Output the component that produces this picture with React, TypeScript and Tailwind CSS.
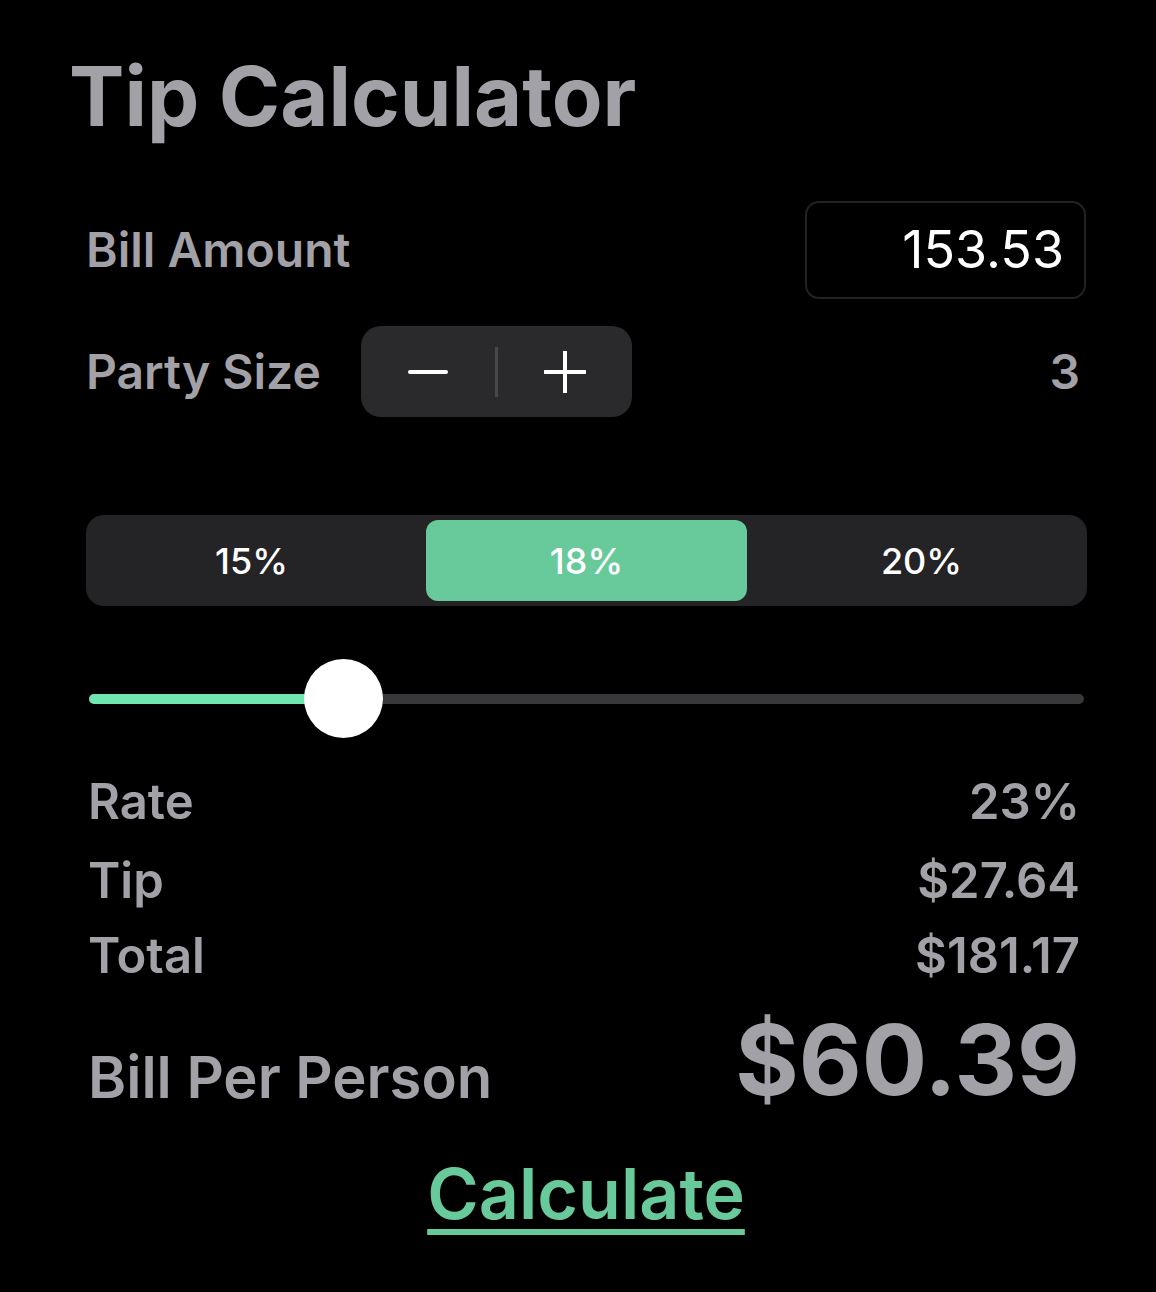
import React from "react";

export default function App() {
  const gray = "text-[#a2a1a7]";
  return (
    <div className="w-[1156px] h-[1292px] bg-black overflow-hidden" style={{ fontFamily: "Inter, 'Noto Sans', sans-serif" }}>
      <div className="pl-[69px] pt-[55px]">
        <h1 className={`text-[83px] font-bold leading-none ${gray}`}>Tip Calculator</h1>
      </div>
      <div className="pl-[86px] pr-[70px]">
        <div className="mt-[63px] flex items-center justify-between">
          <span className={`text-[48px] font-semibold ${gray}`}>Bill Amount</span>
          <div className="w-[281px] h-[98px] rounded-[14px] border-2 border-[#222224] flex items-center justify-end pr-[20px]">
            <span className="text-[52px] text-white">153.53</span>
          </div>
        </div>
        <div className="mt-[27px] flex items-center">
          <span className={`text-[48px] font-semibold ${gray}`}>Party Size</span>
          <div className="ml-[40px] w-[271px] h-[91px] rounded-[20px] bg-[#2a2a2d] flex items-center">
            <div className="flex-1 flex items-center justify-center">
              <div className="w-[40px] h-[4px] bg-white rounded-full" />
            </div>
            <div className="w-[3px] h-[50px] bg-[#48484b]" />
            <div className="flex-1 flex items-center justify-center">
              <svg width="42" height="42" viewBox="0 0 42 42"><path d="M21 1v40M1 21h40" stroke="white" strokeWidth="4" strokeLinecap="round" /></svg>
            </div>
          </div>
          <span className={`ml-auto mr-[6px] text-[48px] font-semibold ${gray}`}>3</span>
        </div>
        <div className="mt-[98px] w-[1001px] h-[91px] rounded-[18px] bg-[#242427] p-[5px] flex">
          <div className="flex-1 flex items-center justify-center pr-[14px] text-[36px] font-medium text-white">15%</div>
          <div className="w-[321px] rounded-[12px] bg-[#68c99a] flex items-center justify-center text-[36px] font-medium text-white">18%</div>
          <div className="flex-1 flex items-center justify-center pl-[14px] text-[36px] font-medium text-white">20%</div>
        </div>
        <div className="mt-[53px] relative w-[995px] h-[80px] flex items-center ml-[3px]">
          <div className="w-full h-[10px] rounded-full bg-[#38383a] flex">
            <div className="w-[256px] h-full rounded-full bg-[#6fe5b0]" />
          </div>
          <div className="absolute left-[215px] top-[0px] w-[79px] h-[79px] rounded-full bg-white" />
        </div>
        <div className="mt-[23px] pl-[2px] pr-[6px] flex flex-col">
          <div className="flex justify-between items-center h-[80px]">
            <span className={`text-[49px] font-semibold ${gray}`}>Rate</span>
            <span className={`text-[49px] font-semibold ${gray}`}>23%</span>
          </div>
          <div className="flex justify-between items-center h-[78px]">
            <span className={`text-[49px] font-semibold ${gray}`}>Tip</span>
            <span className={`text-[49px] font-semibold ${gray}`}>$27.64</span>
          </div>
          <div className="flex justify-between items-center h-[72px]">
            <span className={`text-[49px] font-semibold ${gray}`}>Total</span>
            <span className={`text-[49px] font-semibold ${gray}`}>$181.17</span>
          </div>
          <div className="mt-[19px] flex justify-between items-end">
            <span className={`text-[58px] font-semibold leading-none mb-[2px] ${gray}`}>Bill Per Person</span>
            <span className={`text-[97px] font-bold leading-none ${gray}`}>$60.39</span>
          </div>
        </div>
        <div className="mt-[51px] flex justify-center">
          <span className="text-[70px] font-semibold text-[#68c99a] underline decoration-[6px] underline-offset-[10px] leading-none">Calculate</span>
        </div>
      </div>
    </div>
  );
}
